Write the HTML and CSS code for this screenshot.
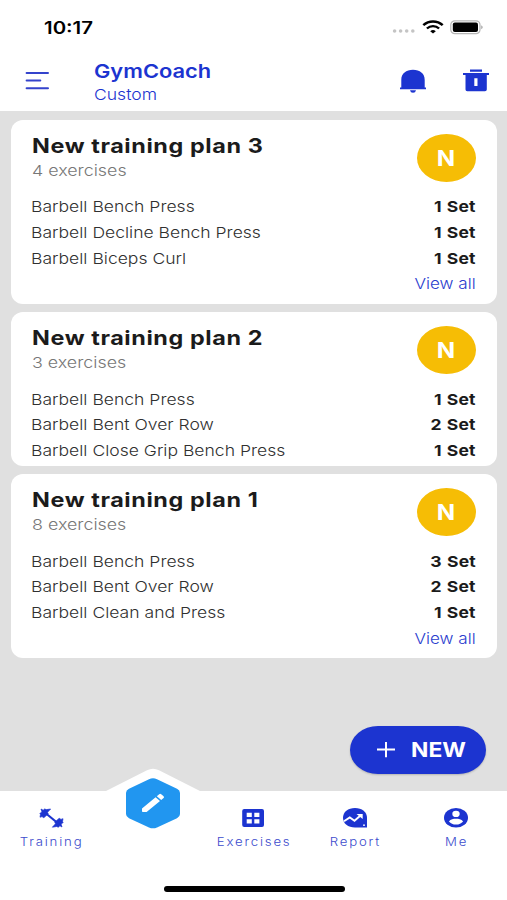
FILE: index.html
```html
<!DOCTYPE html>
<html lang="en">
<head>
<meta charset="utf-8">
<title>GymCoach</title>
<link rel="stylesheet" href="styles.css">
</head>
<body>
<div class="app">
  <div class="status">
    <span class="wide time">10:17</span>
    <div class="status-icons">
      <svg width="24" height="6" viewBox="0 0 24 6" fill="#c4c4c4"><circle cx="2.6" cy="3" r="1.800"/><circle cx="8.6" cy="3" r="1.800"/><circle cx="14.7" cy="3" r="1.800"/><circle cx="20.8" cy="3" r="1.800"/></svg>
      <svg class="wifi" width="22" height="14" viewBox="0 0 22 14" fill="none" stroke="#000"><path d="M1.3 5.2C6.8.1 15.200 .1 20.700 5.200" stroke-width="2.500"/><path d="M4.900 8.500C8.300 5.300 13.700 5.300 17.100 8.500" stroke-width="2.400"/><path d="M8.200 11.200Q11 8.700 13.800 11.200L11 13.400Z" fill="#000" stroke="none"/></svg>
      <svg class="battery" width="34" height="15" viewBox="0 0 34 15"><rect x=".8" y=".8" width="29.200" height="12.900" rx="4" fill="#fff" stroke="#b5b5b5" stroke-width="1.200"/><rect x="2.800" y="2.500" width="25.200" height="9.500" rx="2" fill="#000"/><path d="M31.300 5.200Q34 7.200 31.300 9.300Z" fill="#999"/></svg>
    </div>
  </div>
  <header class="header">
    <svg class="menu" width="26" height="20" viewBox="0 0 26 20" stroke="#3443cc" stroke-width="2" stroke-linecap="round"><path d="M2.600 2H24M2.600 9.500H16.300M2.600 17.200H24"/></svg>
    <div class="brand">
      <h1 class="wide">GymCoach</h1>
      <p class="wide">Custom</p>
    </div>
    <svg class="bell" width="28" height="24" viewBox="0 0 28 24" fill="#1c34d0"><path d="M2.300 18.600V11C2.300 4.400 7.200.8 14 .8S25.700 4.400 25.700 11V18.600H27V20.200H1V18.600Z"/><path d="M11 21.200H17Q16.500 23.700 14 23.700T11 21.200Z"/></svg>
    <svg class="bin" width="28" height="24" viewBox="0 0 28 24" fill="#1c34d0"><path d="M8 .6H20V2.800H8ZM1 4H27V6H1Z"/><path fill-rule="evenodd" d="M3.500 6H24.800V20.500Q24.800 22.200 23 22.200H5.300Q3.500 22.200 3.500 20.500ZM12.300 9.300V17H15.500V9.300Z"/></svg>
  </header>
  <main class="plans">
    <section class="card">
      <div class="card-head">
        <div><h2 class="wide">New training plan 3</h2><p class="wide count">4 exercises</p></div>
        <div class="avatar"><span class="wide">N</span></div>
      </div>
      <ul>
        <li><span class="wide">Barbell Bench Press</span><b class="wide">1 Set</b></li>
        <li><span class="wide">Barbell Decline Bench Press</span><b class="wide">1 Set</b></li>
        <li><span class="wide">Barbell Biceps Curl</span><b class="wide">1 Set</b></li>
      </ul>
      <a class="wide view">View all</a>
    </section>
    <section class="card short">
      <div class="card-head">
        <div><h2 class="wide">New training plan 2</h2><p class="wide count">3 exercises</p></div>
        <div class="avatar"><span class="wide">N</span></div>
      </div>
      <ul>
        <li><span class="wide">Barbell Bench Press</span><b class="wide">1 Set</b></li>
        <li><span class="wide">Barbell Bent Over Row</span><b class="wide">2 Set</b></li>
        <li><span class="wide">Barbell Close Grip Bench Press</span><b class="wide">1 Set</b></li>
      </ul>
    </section>
    <section class="card">
      <div class="card-head">
        <div><h2 class="wide">New training plan 1</h2><p class="wide count">8 exercises</p></div>
        <div class="avatar"><span class="wide">N</span></div>
      </div>
      <ul>
        <li><span class="wide">Barbell Bench Press</span><b class="wide">3 Set</b></li>
        <li><span class="wide">Barbell Bent Over Row</span><b class="wide">2 Set</b></li>
        <li><span class="wide">Barbell Clean and Press</span><b class="wide">1 Set</b></li>
      </ul>
      <a class="wide view">View all</a>
    </section>
    <button class="fab">
      <svg width="20" height="18" viewBox="0 0 20 18" stroke="#fff" stroke-width="2"><path d="M1 8.600H19M10 1V16.200"/></svg>
      <span class="wide">NEW</span>
    </button>
  </main>
  <nav class="nav">
    <div class="tab">
      <svg width="26" height="24" viewBox="0 0 26 24" stroke="#1c34d0" fill="#1c34d0"><path d="M8 7.500L19 16.500" stroke-width="2.200"/><path d="M3 3L5.200 4.200L6.500 3L8.500 3.600L12.600 3L9.500 6.300L10.200 7.800L5.800 11.700L4 10.600L2 11.200L2.500 8.500L1.800 7.500L4 6ZM24 21L21.800 19.700L20.500 21.200L18.500 20.500L14.400 21.200L17.500 17.800L16.800 16.200L21.200 12.300L23 13.400L25 12.700L24.500 15.500L25.200 16.500L23 18Z" stroke-width=".7"/></svg>
      <span class="wide">Training</span>
    </div>
    <div class="tab center">
      <svg class="hex" width="98" height="62" viewBox="0 0 98 62"><path d="M0 24L43 2.200Q49 -.8 55 2.200L98 24Z" fill="#fff"/><path d="M45 11.300Q49 9.200 53 11.300L73 20.700Q76 22.200 76 25V46Q76 48.800 73 50.300L53 59.400Q49 61.300 45 59.400L25 50.300Q22 48.800 22 46V25Q22 22.200 25 20.700Z" fill="#2196f0"/><path d="M38 40.600L51.600 29.300L56 32.900L42.600 44.100H38.800Q38 44.100 38 43.300ZM52.800 28.200L55.200 26.200Q56.200 25.400 57.200 26.200L59.600 28.300Q60.500 29.200 59.600 30L57.200 32Z" fill="#fff"/></svg>
    </div>
    <div class="tab">
      <svg width="26" height="24" viewBox="0 0 26 24"><path fill="#1c34d0" fill-rule="evenodd" d="M4.200 3H22Q24 3 24 5V19Q24 21 22 21H4.200Q2.200 21 2.200 19V5Q2.200 3 4.200 3ZM6.700 6.700V11H11.800V6.700ZM14.300 6.700V11H19.400V6.700ZM6.700 13.200V17.500H11.800V13.200ZM14.300 13.200V17.500H19.400V13.200Z"/></svg>
      <span class="wide">Exercises</span>
    </div>
    <div class="tab">
      <svg width="26" height="24" viewBox="0 0 26 24"><path fill="#1c34d0" d="M13 2C20 2 25 6 25 11.800V21.500H13C6 21.500 1 17.700 1 11.800S6 2 13 2Z"/><path d="M2 15.300L7.800 11.500L12.500 14.700L18.500 9.500" fill="none" stroke="#fff" stroke-width="1.900"/><path d="M14.500 8H20.700V13Z" fill="#fff"/><circle cx="22" cy="19.200" r=".9" fill="#fff"/></svg>
      <span class="wide">Report</span>
    </div>
    <div class="tab">
      <svg width="26" height="24" viewBox="0 0 26 24"><ellipse cx="13" cy="11.800" rx="12" ry="9.800" fill="#1c34d0"/><ellipse cx="13" cy="7.900" rx="3.700" ry="3.100" fill="#fff"/><path d="M5.900 15.500C7.500 13.200 10.500 12.800 13 12.800S18.500 13.200 20.100 15.500C18.300 17.600 16 18.600 13 18.600S7.700 17.600 5.900 15.500Z" fill="#fff"/></svg>
      <span class="wide">Me</span>
    </div>
  </nav>
  <div class="home"></div>
</div>
</body>
</html>
```

FILE: styles.css
```css
* { box-sizing: border-box; margin: 0; padding: 0; }
body { background: #fff; color: #1b1b1b; font-family: Inter, "Open Sans", sans-serif; }
svg { display: block; flex: none; }
ul { list-style: none; }

.app { width: 507px; height: 900px; display: flex; flex-direction: column; overflow: hidden; }

/* Extended lettering: glyphs are widened horizontally */
.wide { display: block; width: max-content; transform: scaleX(var(--w, 1.17)); transform-origin: left center; white-space: nowrap; }

.status { height: 54px; padding: 0 23px 0 44px; display: flex; justify-content: space-between; align-items: center; }
.time { --w: 1.2; padding-top: 1px; font-size: 17px; font-weight: 600; color: #000; }
.status-icons { display: flex; align-items: center; }
.status-icons svg:first-child { margin-top: 8px; }
.wifi { margin: 0 6px 0 6px; }

.header { height: 56.500px; padding: 0 17px 0 24px; display: flex; align-items: flex-start; color: #1c34d0; }
.menu { margin-top: 17px; }
.brand { margin-left: 44px; flex: 1; padding-top: 6px; }
.brand h1 { --w: 1.15; font-size: 19px; line-height: 23px; font-weight: 600; }
.brand p { --w: 1.17; font-size: 15px; line-height: 24px; font-weight: 350; }
.bell { margin: 15px 35px 0 0; }
.bin { margin-top: 15px; }

.plans { height: 680.500px; padding: 9px 10.500px 0 11px; background: #e0e0e0; display: flex; flex-direction: column; gap: 8.500px; }
.card { height: 184px; padding: 13px 20.500px 0 20px; border-radius: 12px; background: #fff; display: flex; flex-direction: column; flex: none; }
.card.short { height: 153.500px; }
.card-head { height: 61.700px; display: flex; justify-content: space-between; padding-left: 1px; }
.card h2 { --w: 1.17; font-size: 20px; line-height: 26px; font-weight: 650; letter-spacing: .5px; }
.count { --w: 1.19; font-size: 15px; line-height: 23px; font-weight: 300; color: #777; }
.avatar { width: 59px; height: 48px; margin-top: 1px; border-radius: 50%; background: #f6bd05; color: #fff; display: flex; align-items: center; justify-content: center; }
.avatar span { --w: 1.15; padding-top: 1px; font-size: 21px; font-weight: 650; transform-origin: center; }
.card li { height: 25.700px; line-height: 25.700px; display: flex; justify-content: space-between; font-size: 15px; font-weight: 350; color: #303030; }
.card b { --w: 1.17; font-weight: 650; word-spacing: .5px; letter-spacing: .2px; color: #1b1b1b; transform-origin: right center; }
.view { --w: 1.14; align-self: flex-end; transform-origin: right center; font-size: 15px; line-height: 25.700px; font-weight: 350; color: #2a3dce; }

.fab { width: 136px; height: 48px; margin: 59.500px 10.500px 0 0; align-self: flex-end; border: 0; border-radius: 28px / 24px; background: #1c34d0; color: #fff; display: flex; align-items: center; padding-left: 26px; font-family: inherit; box-shadow: 0 1px 2px rgba(0, 0, 0, .2); }
.fab .wide { --w: 1.14; margin-left: 15px; font-size: 20px; font-weight: 700; }

.nav { height: 70px; display: grid; grid-template-columns: repeat(5, 1fr); background: #fff; }
.tab { display: flex; flex-direction: column; align-items: center; padding-top: 15px; color: #3c4ccd; }
.tab .wide { --w: 1.2; margin: 4px 0 0 1px; font-size: 11px; line-height: 16px; font-weight: 350; letter-spacing: 1.500px; transform-origin: center; }
.tab svg { margin-left: 0; }
.center { padding: 0; }
.center .hex { margin: -23px 0 0 1px; position: relative; }
.home { width: 181px; height: 6px; margin: 25px 0 0 164px; border-radius: 3px; background: #000; }
```
